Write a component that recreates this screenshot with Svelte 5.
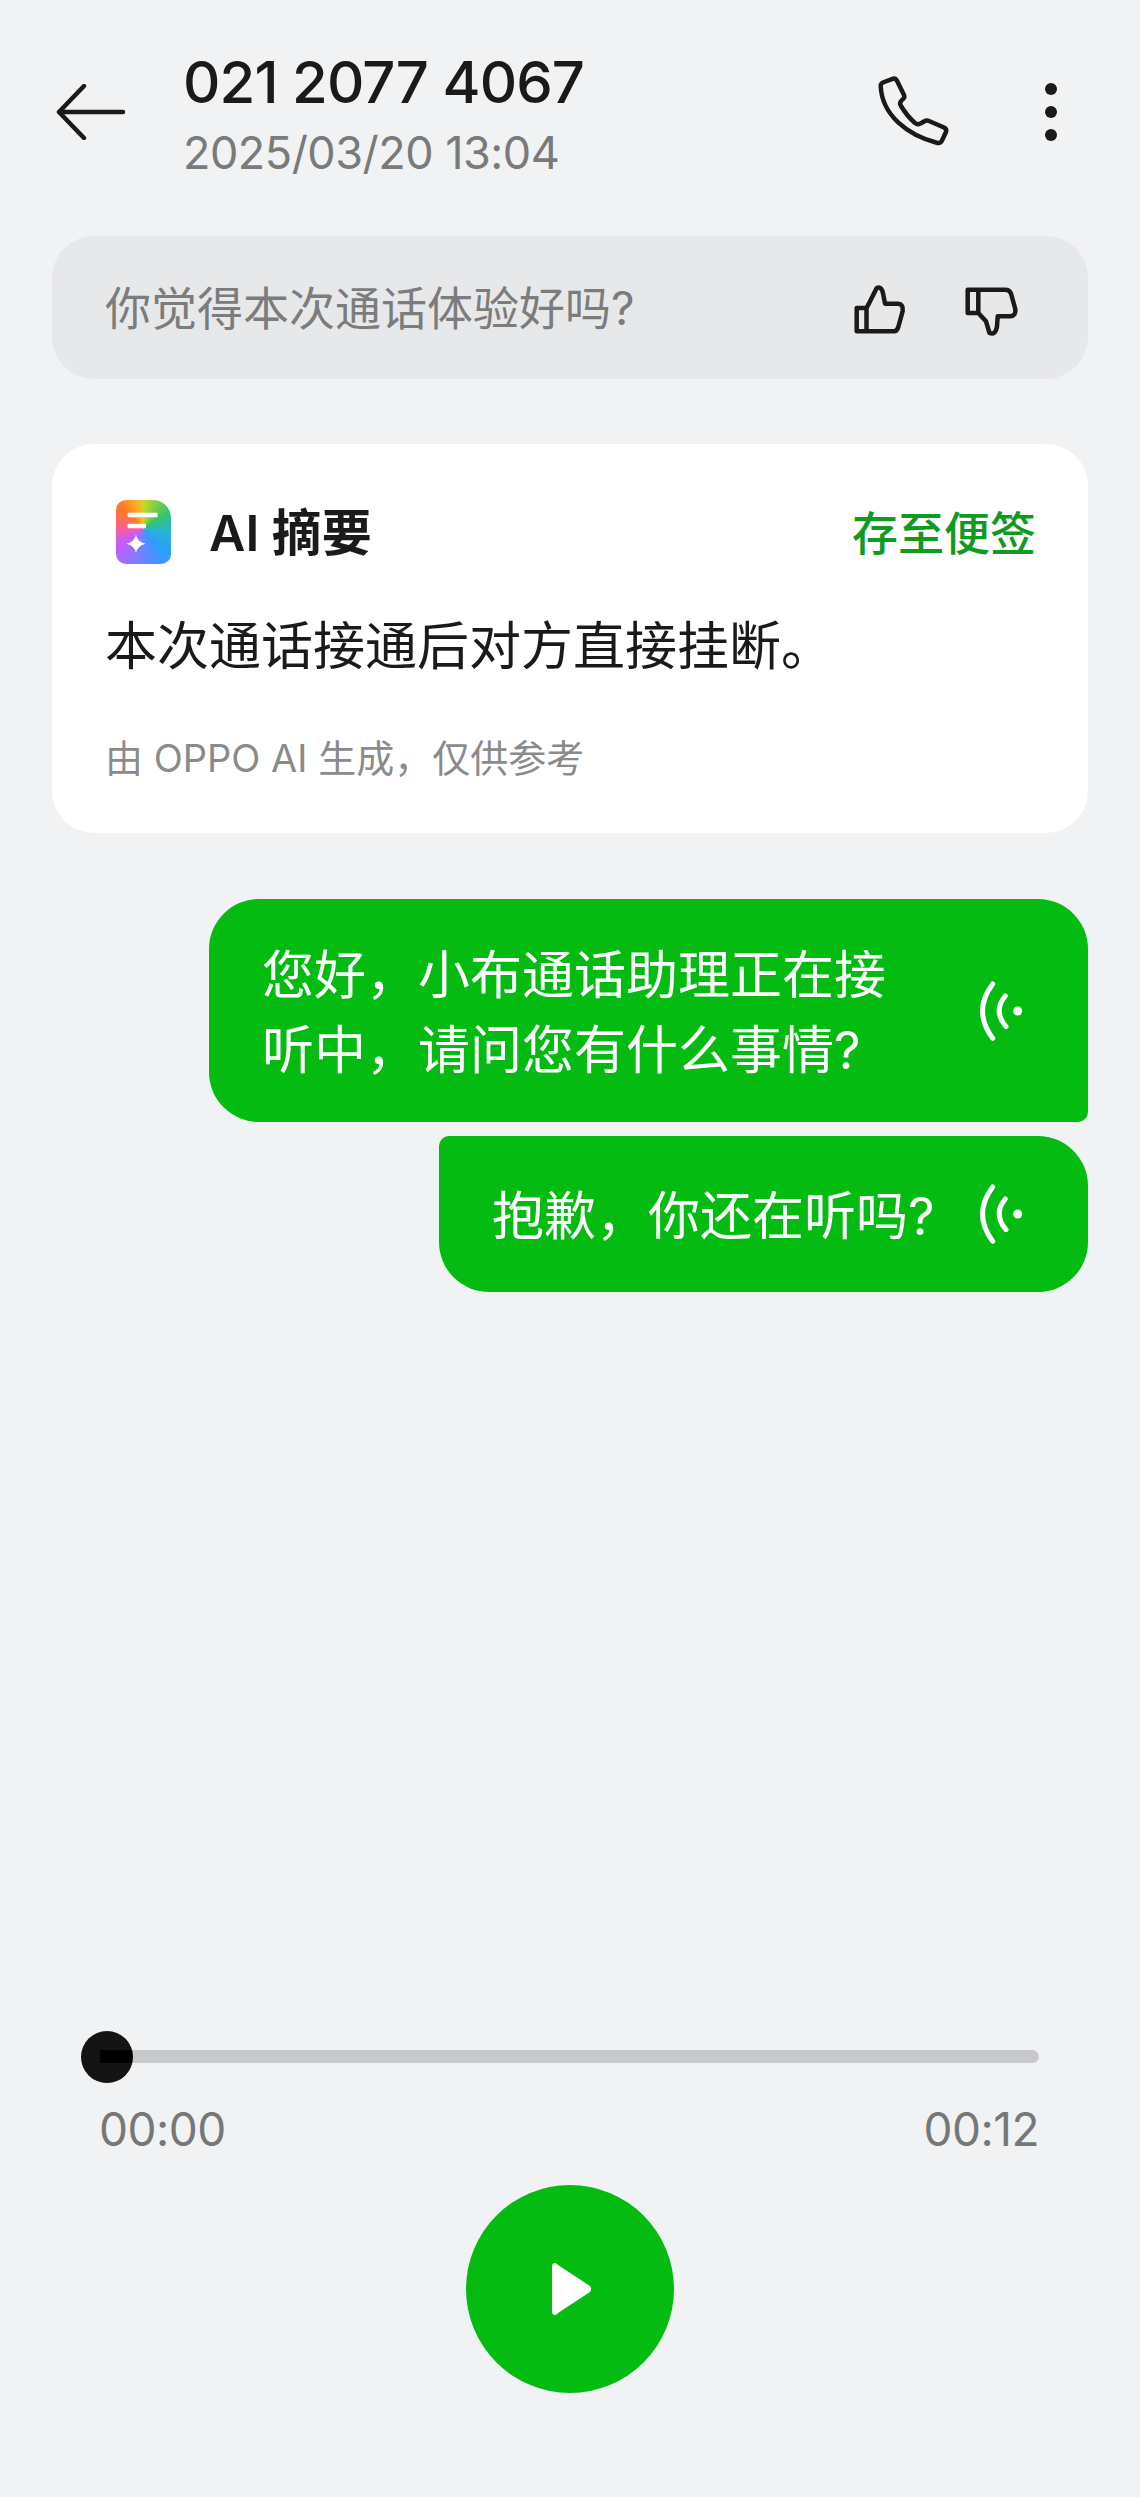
<script>
    const comma = '\uFF0C';
    let messages = [
        { lines: [`您好${comma}小布通话助理正在接`, `听中${comma}请问您有什么事情?`], shape: 'first' },
        { lines: [`抱歉${comma}你还在听吗?`], shape: 'last' }
    ];
</script>

<main class="page">
    <header class="topbar">
        <svg class="back" viewBox="0 0 70 56" aria-label="返回">
            <path d="M28 2 L3 28 L28 54 M3 28 H67" />
        </svg>
        <div class="caller">
            <div class="number">021 2077 4067</div>
            <div class="date">2025/03/20 13:04</div>
        </div>
        <svg class="phone" viewBox="0 0 80 80" aria-label="拨打">
            <path d="M11 12.5 L20.5 8.8 Q23.5 8 25 10.8 L32 25 Q33 27.5 31 29 L29.5 30.5 Q27 33 29 36 Q35 46 43 53 Q45.5 55 48.5 53.5 L52 51.5 Q54.5 50 57 51 L72 57.5 Q75 59 74 62 L70 70.5 Q68.5 73.5 65.5 73 C35 65 10 45 8.7 16 Q8.7 13.5 11 12.5 Z" />
        </svg>
        <div class="more">
            <span></span><span></span><span></span>
        </div>
    </header>

    <section class="feedback">
        <span class="ask">你觉得本次通话体验好吗?</span>
        <svg class="thumb" viewBox="0 0 60 60" aria-label="好">
            <path d="M6.7 30 V53.3 H44 Q47 53.3 48.3 49 L52.7 33 Q53.5 26 48 25.7 H35 L33.3 16.7 Q31.7 7.5 26.7 10 L18.3 26.7 L16.5 30 Z M16.5 30 V53.3" />
        </svg>
        <svg class="thumb" viewBox="0 0 60 60" aria-label="不好">
            <path d="M6.7 11.7 H44 Q48.5 11.7 50 15.5 L54.3 31 Q55 38 49 38.3 H36.7 L36 48.3 Q34.5 57.5 28.5 55 L25 43.3 L17.3 35 H6.7 Z M17.3 11.7 V35" />
        </svg>
    </section>

    <section class="summary">
        <div class="summary-head">
            <div class="logo">
                <svg viewBox="0 0 55 64">
                    <rect x="11.6" y="12.7" width="30" height="4.5" rx="1" />
                    <rect x="11.6" y="23.7" width="18.4" height="4.5" rx="1" />
                    <path d="M20 34.5 Q21.5 42 29.5 43.7 Q21.5 45.5 20 53 Q18.5 45.5 10.5 43.7 Q18.5 42 20 34.5 Z" />
                </svg>
            </div>
            <h2>AI 摘要</h2>
            <span class="save">存至便签</span>
        </div>
        <p class="summary-text">本次通话接通后对方直接挂断。</p>
        <p class="disclaimer">由 OPPO AI 生成{comma}仅供参考</p>
    </section>

    <section class="chat">
        {#each messages as msg}
            <div class="bubble {msg.shape}">
                <div class="bubble-text">
                    {#each msg.lines as line}
                        <div>{line}</div>
                    {/each}
                </div>
                <svg class="voice" viewBox="0 0 50 62">
                    <path d="M16.7 4 Q-3.7 31 16.7 58.3 M29.3 16 Q16.7 31 30 46.7" />
                    <circle cx="41.7" cy="31" r="4.5" />
                </svg>
            </div>
        {/each}
    </section>

    <section class="player">
        <div class="track">
            <div class="knob"></div>
        </div>
        <div class="times">
            <span>00:00</span>
            <span>00:12</span>
        </div>
        <div class="play">
            <svg viewBox="0 0 40 52" aria-label="播放">
                <path d="M0 4 Q0 0 3 0 Q4.5 0 6 2 L38 23 Q40 26 38 29 L6 50 Q4.5 52 3 52 Q0 52 0 48 Z" />
            </svg>
        </div>
    </section>
</main>

<style>
    :global(body) {
        background: #f0f2f4;
    }

    .page {
        display: flex;
        flex-direction: column;
        box-sizing: border-box;
        height: 2497px;
        padding: 0 52px;
        background: #f0f2f4;
        font-family: Inter, "Noto Sans CJK SC", sans-serif;
        color: #1a1a1a;
    }

    .topbar {
        display: flex;
        align-items: flex-start;
        height: 236px;
    }

    .back {
        flex: none;
        width: 70px;
        height: 56px;
        margin: 84px 0 0 4px;
        fill: none;
        stroke: #1a1a1a;
        stroke-width: 4.5;
        stroke-linecap: round;
        stroke-linejoin: round;
    }

    .caller {
        flex: 1;
        margin: 46px 0 0 57px;
    }

    .number {
        font-size: 58px;
        line-height: 70px;
        font-weight: 500;
        letter-spacing: -0.9px;
        padding-top: 1px;
    }

    .date {
        margin-top: 9px;
        font-size: 45px;
        line-height: 54px;
        color: #7a7a7a;
        letter-spacing: -0.5px;
    }

    .phone {
        flex: none;
        width: 80px;
        height: 80px;
        margin: 70px -1px 0 0;
        fill: none;
        stroke: #1a1a1a;
        stroke-width: 4.5;
        stroke-linejoin: round;
    }

    .more {
        display: flex;
        flex-direction: column;
        gap: 11px;
        flex: none;
        margin: 83px 31px 0 94px;
    }

    .more span {
        width: 12px;
        height: 12px;
        border-radius: 50%;
        background: #1a1a1a;
    }

    .feedback {
        display: flex;
        align-items: center;
        box-sizing: border-box;
        height: 143px;
        padding: 0 67px 0 53px;
        border-radius: 42px;
        background: #e7e8ea;
    }

    .ask {
        flex: 1;
        font-size: 46px;
        color: #7c7c7c;
        margin-bottom: 5px;
    }

    .thumb {
        flex: none;
        width: 60px;
        height: 60px;
        fill: none;
        stroke: #1a1a1a;
        stroke-width: 4.5;
        stroke-linejoin: round;
    }

    .thumb + .thumb {
        margin-left: 51px;
    }

    .summary {
        box-sizing: border-box;
        height: 389px;
        margin-top: 65px;
        padding: 53px 53px 0;
        border-radius: 42px;
        background: #fff;
    }

    .summary-head {
        display: flex;
        align-items: center;
    }

    .logo {
        flex: none;
        width: 55px;
        height: 64px;
        margin: -3px 0 0 11px;
        border-radius: 10px 18px 10px 10px;
        background: conic-gradient(from 0deg at 50% 45%, #c8d62a 0deg, #35c56c 55deg, #25b4d8 100deg, #2f9bff 145deg, #7d7dff 190deg, #c35cff 235deg, #ff5f8a 275deg, #ff7a22 315deg, #ffb01f 345deg, #c8d62a 360deg);
    }

    .logo svg {
        display: block;
        width: 100%;
        height: 100%;
        fill: #fff;
    }

    h2 {
        flex: 1;
        margin: 0 0 0 38px;
        font-size: 50px;
        line-height: 70px;
        font-weight: 600;
    }

    .save {
        font-size: 46px;
        color: #0f9a22;
        margin: 0 -1px 6px 0;
        font-weight: 500;
    }

    .summary-text {
        margin: 43px 0 0;
        font-size: 52px;
        line-height: 70px;
        color: #1a1a1a;
    }

    .disclaimer {
        margin: 51px 0 0;
        font-size: 38px;
        line-height: 50px;
        color: #8b8b8b;
    }

    .chat {
        display: flex;
        flex-direction: column;
        align-items: flex-end;
        gap: 14px;
        margin-top: 66px;
    }

    .bubble {
        display: flex;
        align-items: center;
        justify-content: space-between;
        box-sizing: border-box;
        padding: 0 61px 0 53px;
        background: #04bb12;
        color: #fff;
        font-size: 52px;
        line-height: 75px;
    }

    .bubble-text {
        padding-top: 4px;
    }

    .bubble.first {
        width: 879px;
        height: 223px;
        border-radius: 50px 50px 10px 50px;
    }

    .bubble.last {
        width: 649px;
        height: 156px;
        border-radius: 10px 50px 50px 50px;
    }

    .voice {
        flex: none;
        width: 50px;
        height: 62px;
        margin-right: 1px;
        fill: #fff;
    }

    .voice path {
        fill: none;
        stroke: #fff;
        stroke-width: 5;
        stroke-linecap: round;
    }

    .player {
        display: flex;
        flex-direction: column;
        margin-top: auto;
        padding: 0 0 104px;
    }

    .track {
        display: flex;
        align-items: center;
        height: 13px;
        margin: 0 49px 0 48px;
        border-radius: 7px;
        background: #c8c9cb;
        transform: translateY(1px);
    }

    .knob {
        flex: none;
        width: 52px;
        height: 52px;
        margin-left: -19px;
        border-radius: 50%;
        background: linear-gradient(#000, #000) 19px 19.5px / 33px 13px no-repeat, #141414;
    }

    .times {
        display: flex;
        justify-content: space-between;
        margin: 39px 49px 0 47px;
        font-size: 46px;
        line-height: 56px;
        color: #777;
        letter-spacing: -0.5px;
    }

    .play {
        display: flex;
        align-items: center;
        justify-content: center;
        align-self: center;
        width: 208px;
        height: 208px;
        margin-top: 28px;
        border-radius: 50%;
        background: #04bb12;
    }

    .play svg {
        width: 40px;
        height: 52px;
        margin-left: 4px;
        fill: #fff;
    }
</style>
